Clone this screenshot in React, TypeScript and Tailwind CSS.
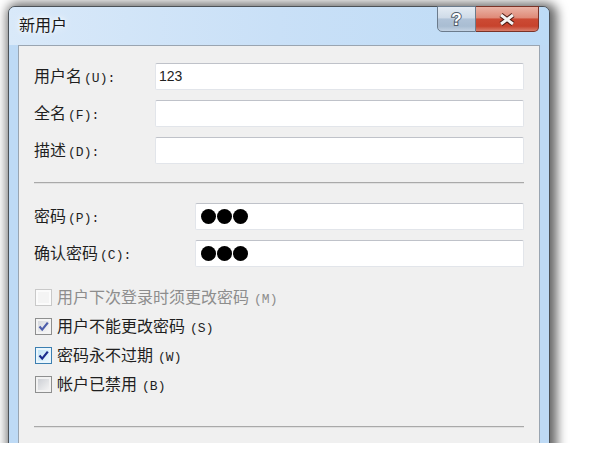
import React from "react";

// hotkey part like "(U):" is drawn in a fixed-width face, as on the dialog
function Label({ text, hot, colon = true, disabled = false }: { text: string; hot: string; colon?: boolean; disabled?: boolean }) {
    return (
        <span className={`text-[16px] leading-none whitespace-nowrap ${disabled ? "text-[#8d8d8d]" : "text-[#1f1f1f]"}`}>
            {text}
            <span className={`font-['Liberation_Mono',monospace] text-[13px] ${colon ? "ml-[2px]" : "ml-[5px]"}`}>
                ({hot}){colon ? ":" : ""}
            </span>
        </span>
    );
}

function TextBox({ children }: { children?: React.ReactNode }) {
    return (
        <div className="flex-1 h-[27px] bg-white border border-[#e2e5ea] border-t-[#bfc2c9] rounded-[2px] flex items-center pl-[3px]">
            {children}
        </div>
    );
}

function Dots() {
    return (
        <div className="flex gap-[1px] pl-[2px]">
            <span className="w-[15px] h-[15px] rounded-full bg-black" />
            <span className="w-[15px] h-[15px] rounded-full bg-black" />
            <span className="w-[15px] h-[15px] rounded-full bg-black" />
        </div>
    );
}

type BoxState = "disabled" | "checked" | "hover" | "off";

function CheckBox({ state }: { state: BoxState }) {
    const outer = {
        disabled: "border-[#c9c9c9] bg-[#fbfbfb]",
        checked: "border-[#8e8f8f] bg-[#f4f4f4]",
        hover: "border-[#3c7fb1] bg-[#eaf6fd]",
        off: "border-[#8e8f8f] bg-[#f2f2f2]",
    }[state];
    const inner = {
        disabled: "bg-[#f4f4f4]",
        checked: "bg-gradient-to-br from-[#d6d9de] to-[#f7f7f7]",
        hover: "bg-gradient-to-br from-[#c2e4f6] to-[#e9f7fe]",
        off: "bg-gradient-to-br from-[#cdd0d5] to-[#f3f3f3]",
    }[state];
    const tick = state === "checked" ? "#4d5eab" : "#1b2c8c";
    return (
        <div className={`relative w-[17px] h-[17px] border p-[2px] shrink-0 ${outer}`}>
            <div className={`w-full h-full ${inner}`} />
            {(state === "checked" || state === "hover") && (
                <svg className="absolute inset-0" width="15" height="15" viewBox="0 0 15 15">
                    <path d="M3.5 7.5 L6.2 10.6 L11.8 3.6" fill="none" stroke={tick} strokeWidth="2.2" />
                </svg>
            )}
        </div>
    );
}

export default function App() {
    const checks: { text: string; hot: string; state: BoxState }[] = [
        { text: "用户下次登录时须更改密码", hot: "M", state: "disabled" },
        { text: "用户不能更改密码", hot: "S", state: "checked" },
        { text: "密码永不过期", hot: "W", state: "hover" },
        { text: "帐户已禁用", hot: "B", state: "off" },
    ];

    return (
        <div className="w-[593px] h-[451px] bg-white font-['Liberation_Sans','Noto_Sans_CJK_SC',sans-serif]">
            <div className="h-[443px] overflow-hidden pl-[8px] pt-[6px]">
                <div className="w-[542px] h-[500px] rounded-t-[7px] border border-[#4c5258] bg-[#bedaf5] shadow-[3px_1px_11px_4px_rgba(0,0,0,0.6)] flex flex-col">
                    {/* Title bar */}
                    <div className="h-[38px] rounded-t-[6px] bg-gradient-to-r from-[#d9e9f9] via-[#c9e0f7] to-[#bddbf6] flex justify-between items-start">
                        <span className="self-center pl-[10px] text-[16px] leading-none text-[#1a1a1a] [text-shadow:0_0_8px_#ffffff,0_0_4px_#ffffff]">
                            新用户
                        </span>
                        <div className="flex -mt-px mr-[10px]">
                            <div className="w-[39px] h-[26px] rounded-bl-[5px] border border-[#6b7b8c] bg-[linear-gradient(#e4ecf4,#cfdbe8_45%,#b0c3d8_50%,#a9bdd2_80%,#c3d3e4)] flex items-center justify-center">
                                <span className="text-[17px] font-bold leading-none text-white [-webkit-text-stroke:2px_#4f5c6b] [paint-order:stroke_fill]">?</span>
                            </div>
                            <div className="w-[63px] h-[26px] rounded-br-[5px] border border-l-0 border-[#7a3328] bg-[linear-gradient(#eab3a6,#df8a78_45%,#cc4a34_50%,#c7432d_80%,#d97f6c)] flex items-center justify-center">
                                <svg width="20" height="13" viewBox="0 0 20 13">
                                    <path d="M4 2 L16 11 M16 2 L4 11" stroke="#4a1810" strokeWidth="5" />
                                    <path d="M4 2 L16 11 M16 2 L4 11" stroke="#f4f4f4" strokeWidth="3" />
                                </svg>
                            </div>
                        </div>
                    </div>

                    {/* Dialog body */}
                    <div className="flex-1 mx-[9px] border border-[#9aa5b1] bg-[#f0f0f0] px-[15px] pt-[17px]">
                        <div className="flex flex-col gap-[10px]">
                            <div className="flex items-center">
                                <div className="w-[121px]"><Label text="用户名" hot="U" /></div>
                                <TextBox><span className="text-[14px] text-[#222]">123</span></TextBox>
                            </div>
                            <div className="flex items-center">
                                <div className="w-[121px]"><Label text="全名" hot="F" /></div>
                                <TextBox />
                            </div>
                            <div className="flex items-center">
                                <div className="w-[121px]"><Label text="描述" hot="D" /></div>
                                <TextBox />
                            </div>
                        </div>

                        <div className="mt-[18px] h-[2px] border-t border-[#a9a9a9] border-b border-b-[#e0e0e0]" />

                        <div className="mt-[19px] flex flex-col gap-[10px]">
                            <div className="flex items-center">
                                <div className="w-[161px]"><Label text="密码" hot="P" /></div>
                                <TextBox><Dots /></TextBox>
                            </div>
                            <div className="flex items-center">
                                <div className="w-[161px]"><Label text="确认密码" hot="C" /></div>
                                <TextBox><Dots /></TextBox>
                            </div>
                        </div>

                        <div className="mt-[16px] flex flex-col">
                            {checks.map((c) => (
                                <div key={c.hot} className="h-[29px] flex items-center gap-[5px] pl-[1px]">
                                    <CheckBox state={c.state} />
                                    <Label text={c.text} hot={c.hot} colon={false} disabled={c.state === "disabled"} />
                                </div>
                            ))}
                        </div>

                        <div className="mt-[27px] h-[2px] border-t border-[#a9a9a9] border-b border-b-[#e0e0e0]" />
                    </div>
                </div>
            </div>
        </div>
    );
}
